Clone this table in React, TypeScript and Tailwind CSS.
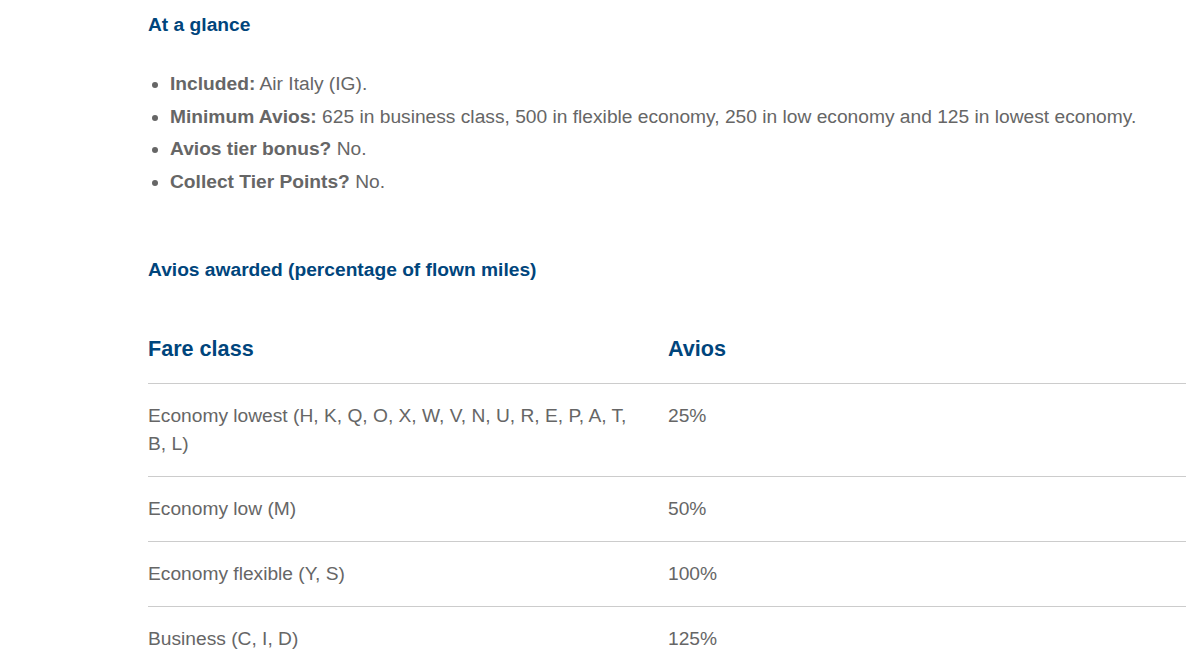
const rows = [
  { fare: "Economy lowest (H, K, Q, O, X, W, V, N, U, R, E, P, A, T, B, L)", avios: "25%" },
  { fare: "Economy low (M)", avios: "50%" },
  { fare: "Economy flexible (Y, S)", avios: "100%" },
  { fare: "Business (C, I, D)", avios: "125%" },
];

const glance = [
  { label: "Included:", text: "Air Italy (IG)." },
  {
    label: "Minimum Avios:",
    text: "625 in business class, 500 in flexible economy, 250 in low economy and 125 in lowest economy.",
  },
  { label: "Avios tier bonus?", text: "No." },
  { label: "Collect Tier Points?", text: "No." },
];

export default function App() {
  return (
    <div className="min-h-screen bg-white pl-[148px] pt-[11px] font-['Liberation_Sans',Arial,sans-serif] text-[#666] overflow-hidden">
      <h3 className="text-[19.2px] leading-[28px] font-bold text-[#00457c]">At a glance</h3>

      <ul className="mt-[29px] list-disc pl-[22px] text-[19.2px] leading-[32.5px] marker:text-[#666]">
        {glance.map((g) => (
          <li key={g.label}>
            <strong className="font-bold">{g.label}</strong> {g.text}
          </li>
        ))}
      </ul>

      <h3 className="mt-[58px] text-[19.2px] leading-[28px] font-bold text-[#00457c]">
        Avios awarded (percentage of flown miles)
      </h3>

      <table className="mt-[31px] w-[1060px] border-collapse text-left">
        <thead>
          <tr className="border-b border-[#ccc]">
            <th className="w-[520px] py-[18px] pr-[20px] text-[21.6px] leading-[32px] font-bold text-[#00457c]">
              Fare class
            </th>
            <th className="py-[18px] text-[21.6px] leading-[32px] font-bold text-[#00457c]">Avios</th>
          </tr>
        </thead>
        <tbody>
          {rows.map((r) => (
            <tr key={r.fare} className="border-b border-[#ccc] align-top">
              <td className="w-[520px] py-[18px] pr-[40px] text-[19.2px] leading-[28px]">{r.fare}</td>
              <td className="py-[18px] text-[19.2px] leading-[28px]">{r.avios}</td>
            </tr>
          ))}
        </tbody>
      </table>
    </div>
  );
}
